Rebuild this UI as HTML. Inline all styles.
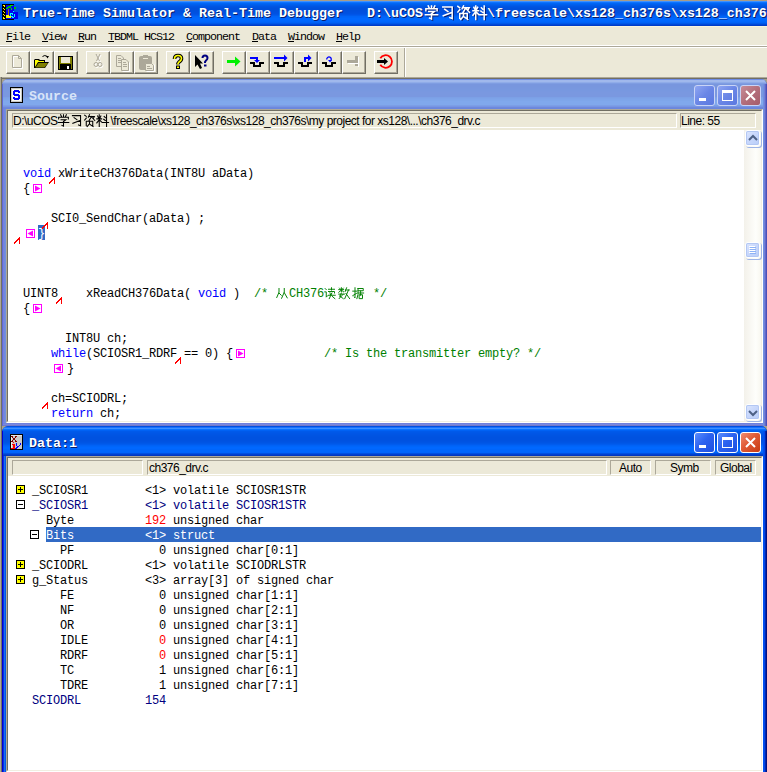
<!DOCTYPE html><html><head><meta charset="utf-8"><style>
*{margin:0;padding:0;box-sizing:border-box}
html,body{width:767px;height:772px;overflow:hidden;background:#ECE9D8;font-family:"Liberation Sans",sans-serif}
.a{position:absolute}
#title{left:0;top:0;width:767px;height:26px;background:linear-gradient(#A89C88 0px,#A89C88 1px,#3D90FF 1px,#3D90FF 2px,#0C72FF 2px,#0C72FF 3px,#0066F5 3px,#0066F5 4px,#0060EE 4px,#0060EE 5px,#005AE8 5px,#005AE8 6px,#0055E2 6px,#0055E2 7px,#0052DE 7px,#0052DE 8px,#0050DC 8px,#0050DC 9px,#0050DC 9px,#0050DC 10px,#0050DC 10px,#0050DC 11px,#0050DE 11px,#0050DE 12px,#0051E0 12px,#0051E0 13px,#0052E2 13px,#0052E2 14px,#0055E8 14px,#0055E8 15px,#005CEE 15px,#005CEE 16px,#0064F8 16px,#0064F8 17px,#0066FA 17px,#0066FA 18px,#0068FF 18px,#0068FF 19px,#0068FF 19px,#0068FF 20px,#0068FF 20px,#0068FF 21px,#0066FC 21px,#0066FC 22px,#0062F6 22px,#0062F6 23px,#0058E8 23px,#0058E8 24px,#0048D8 24px,#0048D8 25px,#003CC8 25px,#003CC8 26px)}
#ttext{left:23px;top:5px;font:bold 13.33px/18px "Liberation Mono",monospace;color:#fff;white-space:pre;text-shadow:1px 1px 0 #0A1C6A}
#menu{left:0;top:26px;width:767px;height:19px;background:linear-gradient(#F8F4DE 0,#F8F4DE 1px,#ECE9D8 1px)}
.mi{top:30px;font:11.67px/14px "Liberation Mono",monospace;letter-spacing:-1px;color:#000;white-space:pre}
.mi u{text-decoration:none}
#sep1{left:0;top:46px;width:767px;height:1px;background:#ACA899}
#sep2{left:0;top:45px;width:767px;height:1px;background:#FFFFFF}#sep3{left:0;top:47px;width:767px;height:1px;background:#FFFFFF}
.btn{top:51px;width:24px;height:23px;border-top:1px solid #fff;border-left:1px solid #fff;border-right:1px solid #716F64;border-bottom:1px solid #716F64;box-shadow:inset -1px -1px 0 #ACA899;background:#ECE9D8}
.btn svg{position:absolute;left:-1px;top:-1px}
#tbend{left:404px;top:48px;width:2px;height:29px;border-left:1px solid #ACA899;border-right:1px solid #fff}
#mdiT{left:0;top:77px;width:767px;height:2px;background:linear-gradient(#ACA899 0,#ACA899 1px,#716F64 1px)}
#mdiL{left:0;top:77px;width:2px;height:695px;background:linear-gradient(90deg,#ACA899 0,#ACA899 1px,#716F64 1px)}
.win{left:2px;width:765px;border-radius:6px 6px 0 0;overflow:hidden}
.code{font:12px/15px "Liberation Mono",monospace;letter-spacing:-0.2px;white-space:pre;color:#000}
.kw{color:#0000FF}.cm{color:#008000}
.fld{border-top:1px solid #ACA899;border-left:1px solid #ACA899;border-bottom:1px solid #fff;border-right:1px solid #fff;background:#ECE9D8;font:12px/13px "Liberation Sans",sans-serif;letter-spacing:-0.5px;color:#000;white-space:pre}
.tb{width:21px;height:21px;border-radius:3px}
.row{font:12px/15px "Liberation Mono",monospace;letter-spacing:-0.2px;white-space:pre;color:#000}
</style></head><body><div id="title" class="a"></div>
<svg class="a" style="left:2px;top:4px" width="16" height="16" viewBox="0 0 16 16" shape-rendering="crispEdges"><rect x="11" y="8" width="5" height="7" fill="#0000F0"/><rect x="10" y="10" width="5" height="5" fill="#0000F0"/><rect x="0" y="0" width="12" height="16" fill="#000"/><rect x="4" y="1" width="8" height="14" fill="#0000F0"/><rect x="1" y="1" width="2" height="1" fill="#FFFF00"/><rect x="2" y="2" width="1" height="1" fill="#FFFF00"/><rect x="1" y="4" width="1" height="1" fill="#FFFF00"/><rect x="2" y="5" width="1" height="1" fill="#FFFF00"/><rect x="1" y="7" width="1" height="1" fill="#FFFF00"/><rect x="2" y="8" width="1" height="1" fill="#FFFF00"/><rect x="1" y="10" width="1" height="1" fill="#FFFF00"/><rect x="2" y="11" width="1" height="1" fill="#FFFF00"/><rect x="1" y="13" width="1" height="1" fill="#FFFF00"/><rect x="1" y="14" width="2" height="1" fill="#FFFF00"/><rect x="6" y="5" width="1" height="4" fill="#A08020"/><rect x="6" y="8" width="1" height="4" fill="#A08020"/><rect x="6" y="2" width="3" height="2" fill="#00C000"/><rect x="5" y="3" width="1" height="1" fill="#00E000"/><rect x="9" y="1" width="2" height="1" fill="#00E000"/><rect x="4" y="4" width="2" height="1" fill="#00E000"/><rect x="9" y="4" width="1" height="2" fill="#00E000"/><rect x="8" y="1" width="1" height="1" fill="#00E000"/><rect x="12" y="3" width="2" height="2" fill="#00C000"/><rect x="8" y="9" width="3" height="1" fill="#00FFFF"/><rect x="8" y="10" width="1" height="2" fill="#00FFFF"/><rect x="10" y="10" width="1" height="1" fill="#00FFFF"/><rect x="9" y="12" width="2" height="1" fill="#00FFFF"/><rect x="11" y="7" width="1" height="1" fill="#00FFFF"/><rect x="12" y="10" width="1" height="3" fill="#00FFFF"/><rect x="10" y="13" width="2" height="1" fill="#00FFFF"/><rect x="4" y="11" width="3" height="3" fill="#FFFF00"/><rect x="7" y="12" width="2" height="2" fill="#FFFF00"/></svg>
<svg class="a" style="left:424px;top:5px;overflow:visible" width="15" height="15" viewBox="0 0 16 16"><path d="M4.5 1 L5.5 3 M8 1 V3 M11.5 1 L10.5 3 M2 6 V4 H14 V6 M5 7 H11 L8 9.5 M8 9 V15 L6 14 M1.5 10.5 H14.5" transform="translate(1,1)" stroke="#0A1C6A" stroke-width="1.6" fill="none"/><path d="M4.5 1 L5.5 3 M8 1 V3 M11.5 1 L10.5 3 M2 6 V4 H14 V6 M5 7 H11 L8 9.5 M8 9 V15 L6 14 M1.5 10.5 H14.5" stroke="#fff" stroke-width="1.6" fill="none" stroke-linecap="square"/></svg><svg class="a" style="left:440px;top:5px;overflow:visible" width="15" height="15" viewBox="0 0 16 16"><path d="M3 2 H13 V14.5 L10.5 13.5 M5 4.5 L8.5 7 M3.5 11.5 L12.5 8" transform="translate(1,1)" stroke="#0A1C6A" stroke-width="1.6" fill="none"/><path d="M3 2 H13 V14.5 L10.5 13.5 M5 4.5 L8.5 7 M3.5 11.5 L12.5 8" stroke="#fff" stroke-width="1.6" fill="none" stroke-linecap="square"/></svg><svg class="a" style="left:456px;top:5px;overflow:visible" width="15" height="15" viewBox="0 0 16 16"><path d="M2 1.5 L4 3 M2 7.5 L4 5 M8 1 L6.5 4 M7 3 H14 L13 5 M10.5 3 L7.5 8 M11 4 L14.5 8 M4 9 V14 M4 9 H12 V14 M8 10 V12 L5 15.5 M9 13 L12.5 15.5" transform="translate(1,1)" stroke="#0A1C6A" stroke-width="1.6" fill="none"/><path d="M2 1.5 L4 3 M2 7.5 L4 5 M8 1 L6.5 4 M7 3 H14 L13 5 M10.5 3 L7.5 8 M11 4 L14.5 8 M4 9 V14 M4 9 H12 V14 M8 10 V12 L5 15.5 M9 13 L12.5 15.5" stroke="#fff" stroke-width="1.6" fill="none" stroke-linecap="square"/></svg><svg class="a" style="left:472px;top:5px;overflow:visible" width="15" height="15" viewBox="0 0 16 16"><path d="M1 6 H7 M4 1 V15.5 M2 2.5 L3 4.5 M6 2.5 L5 4.5 M4 7 L1 11 M4 7 L7 10 M10 3 L11.5 4.5 M9.5 6.5 L11.5 8 M8 10.5 H15.5 M13 1 V15.5" transform="translate(1,1)" stroke="#0A1C6A" stroke-width="1.6" fill="none"/><path d="M1 6 H7 M4 1 V15.5 M2 2.5 L3 4.5 M6 2.5 L5 4.5 M4 7 L1 11 M4 7 L7 10 M10 3 L11.5 4.5 M9.5 6.5 L11.5 8 M8 10.5 H15.5 M13 1 V15.5" stroke="#fff" stroke-width="1.6" fill="none" stroke-linecap="square"/></svg>
<div id="ttext" class="a">True-Time Simulator &amp; Real-Time Debugger   D:\uCOS<span style="display:inline-block;width:64px"></span>\freescale\xs128_ch376s\xs128_ch376s\</div>
<div id="menu" class="a"></div>
<div class="a mi" style="left:6px">File</div><div class="a" style="left:6px;top:41px;width:6px;height:1px;background:#000"></div>
<div class="a mi" style="left:42px">View</div><div class="a" style="left:42px;top:41px;width:6px;height:1px;background:#000"></div>
<div class="a mi" style="left:78px">Run</div><div class="a" style="left:78px;top:41px;width:6px;height:1px;background:#000"></div>
<div class="a mi" style="left:108px">TBDML HCS12</div><div class="a" style="left:108px;top:41px;width:6px;height:1px;background:#000"></div>
<div class="a mi" style="left:186px">Component</div><div class="a" style="left:186px;top:41px;width:6px;height:1px;background:#000"></div>
<div class="a mi" style="left:252px">Data</div><div class="a" style="left:252px;top:41px;width:6px;height:1px;background:#000"></div>
<div class="a mi" style="left:288px">Window</div><div class="a" style="left:288px;top:41px;width:6px;height:1px;background:#000"></div>
<div class="a mi" style="left:336px">Help</div><div class="a" style="left:336px;top:41px;width:6px;height:1px;background:#000"></div>
<div id="sep1" class="a"></div><div id="sep2" class="a"></div><div id="sep3" class="a"></div>
<div class="a btn" style="left:6px"><svg width="24" height="23" viewBox="0 0 24 23"><path d="M7.5 5.5 H13.5 L16.5 8.5 V17.5 H7.5 Z" fill="none" stroke="#fff"/><path d="M6.5 4.5 H12.5 L15.5 7.5 V16.5 H6.5 Z M12.5 4.5 V7.5 H15.5" fill="none" stroke="#ACA899"/></svg></div>
<div class="a btn" style="left:30px"><svg width="24" height="23" viewBox="0 0 24 23"><path d="M4 9 V17 H15 L19 11 H15 V9 H10 L9 8 H5 Z" fill="#000"/><path d="M5 9 H8 L9 10 H14 V11 H8 L5 16 Z" fill="#FFFF00"/><path d="M8.5 12 H18 L14.5 16.5 H5.5 Z" fill="#808000"/><path d="M12.5 5.5 Q14.5 3.5 17.5 5.5" stroke="#000" fill="none"/><path d="M16 5 H19 L17.5 7.5 Z" fill="#000"/></svg></div>
<div class="a btn" style="left:54px"><svg width="24" height="23" viewBox="0 0 24 23"><rect x="4" y="5" width="15" height="14" fill="#000"/><rect x="5" y="6" width="13" height="7" fill="#808000"/><rect x="7" y="6" width="9" height="6" fill="#ECE9D8"/><rect x="7" y="14" width="9" height="5" fill="#000"/><rect x="13" y="15" width="2" height="3" fill="#fff"/><rect x="5" y="13" width="1" height="5" fill="#808000"/><rect x="17" y="13" width="1" height="5" fill="#808000"/></svg></div>
<div class="a btn" style="left:86px"><svg width="24" height="23" viewBox="0 0 24 23"><path d="M11 4 L14.5 11 M15 4 L11.5 11" stroke="#fff" fill="none"/><circle cx="11" cy="14.5" r="2" stroke="#fff" fill="none"/><circle cx="15" cy="14.5" r="2" stroke="#fff" fill="none"/><path d="M10 3 L13.5 10 M14 3 L10.5 10" stroke="#ACA899" fill="none"/><circle cx="10" cy="13.5" r="2" stroke="#ACA899" fill="none"/><circle cx="14" cy="13.5" r="2" stroke="#ACA899" fill="none"/></svg></div>
<div class="a btn" style="left:110px"><svg width="24" height="23" viewBox="0 0 24 23"><path d="M6.5 4.5 H11 L13.5 7 V15.5 H6.5 Z" fill="#ECE9D8" stroke="#ACA899"/><path d="M8 7.5 H11 M8 9.5 H12 M8 11.5 H12" stroke="#ACA899"/><path d="M11.5 8.5 H16 L18.5 11 V19.5 H11.5 Z" fill="#ECE9D8" stroke="#ACA899"/><path d="M13 11.5 H16 M13 13.5 H17 M13 15.5 H17" stroke="#ACA899"/><path d="M12.5 20.5 H19.5 V11.5" stroke="#fff" fill="none"/></svg></div>
<div class="a btn" style="left:134px"><svg width="24" height="23" viewBox="0 0 24 23"><rect x="5" y="5" width="13" height="14" rx="2" fill="#ACA899"/><rect x="9" y="4" width="5" height="2" fill="#ACA899"/><rect x="9" y="7" width="5" height="1" fill="#ECE9D8"/><path d="M11.5 12.5 H17.5 L19.5 14.5 V19.5 H11.5 Z" fill="#ECE9D8" stroke="#ACA899"/><path d="M13 15.5 H16 M13 17.5 H18" stroke="#ACA899"/><path d="M12.5 20.5 H20.5 V13.5" stroke="#fff" fill="none"/></svg></div>
<div class="a btn" style="left:166px"><svg width="24" height="23" viewBox="0 0 24 23"><path d="M8.5 8 Q8.5 4.5 12 4.5 Q15.5 4.5 15.5 7.5 Q15.5 9.5 13 11 L12 12.5 V13.5" stroke="#000" stroke-width="3.6" fill="none"/><path d="M8.5 8 Q8.5 4.5 12 4.5 Q15.5 4.5 15.5 7.5 Q15.5 9.5 13 11 L12 12.5 V13.5" stroke="#FFFF00" stroke-width="1.6" fill="none"/><rect x="10" y="14.5" width="4" height="3.5" fill="#000"/><rect x="11" y="15.5" width="2" height="1.5" fill="#FFFF00"/></svg></div>
<div class="a btn" style="left:190px"><svg width="24" height="23" viewBox="0 0 24 23"><path d="M5 4 V16 L7.5 13.5 L10 18 L12 17 L10 12.5 L13 12.5 Z" fill="#000"/><path d="M12.5 7 Q12.5 4.5 15 4.5 Q17.5 4.5 17.5 7 Q17.5 8.5 16 9.5 L15 11 V12" stroke="#000080" stroke-width="2" fill="none"/><rect x="14" y="13.5" width="2.5" height="2" fill="#000080"/></svg></div>
<div class="a btn" style="left:222px"><svg width="24" height="23" viewBox="0 0 24 23"><rect x="5" y="9" width="9" height="3" fill="#00F000"/><path d="M13 5.5 L18.5 10.5 L13 15.5 Z" fill="#00F000"/></svg></div>
<div class="a btn" style="left:246px"><svg width="24" height="23" viewBox="0 0 24 23"><rect x="4" y="6" width="7" height="2" fill="#0000FF"/><rect x="10" y="6" width="2" height="4" fill="#0000FF"/><path d="M8 9 H14 L11 12 Z" fill="#0000FF"/><path d="M4 11 H9 V14 H13 V11 H18 V13 H15 V16 H7 V13 H4 Z" fill="#000"/></svg></div>
<div class="a btn" style="left:270px"><svg width="24" height="23" viewBox="0 0 24 23"><rect x="4" y="6" width="11" height="2" fill="#0000FF"/><path d="M14 3.5 L17.5 7 L14 10.5 Z" fill="#0000FF"/><path d="M4 11 H9 V14 H13 V11 H18 V13 H15 V16 H7 V13 H4 Z" fill="#000"/></svg></div>
<div class="a btn" style="left:294px"><svg width="24" height="23" viewBox="0 0 24 23"><rect x="10" y="6" width="2" height="5" fill="#0000FF"/><rect x="10" y="6" width="5" height="2" fill="#0000FF"/><path d="M14 3.5 L17.5 7 L14 10.5 Z" fill="#0000FF"/><path d="M4 11 H9 V14 H13 V11 H18 V13 H15 V16 H7 V13 H4 Z" fill="#000"/></svg></div>
<div class="a btn" style="left:318px"><svg width="24" height="23" viewBox="0 0 24 23"><path d="M8.7 8.5 A2.3 2.3 0 1 1 12.5 10" stroke="#0000FF" stroke-width="1.3" fill="none"/><path d="M10 9 H14 L12 11.5 Z" fill="#0000FF"/><path d="M4 11 H9 V14 H13 V11 H18 V13 H15 V16 H7 V13 H4 Z" fill="#000"/></svg></div>
<div class="a btn" style="left:342px"><svg width="24" height="23" viewBox="0 0 24 23"><rect x="5" y="9" width="10" height="3" fill="#ACA899"/><rect x="13" y="5" width="3" height="10" fill="#ACA899"/><rect x="6" y="12" width="10" height="1" fill="#fff"/><rect x="16" y="6" width="1" height="10" fill="#fff"/></svg></div>
<div class="a btn" style="left:374px"><svg width="24" height="23" viewBox="0 0 24 23"><path d="M6.3 7.2 A6.3 6.3 0 1 1 6.3 13.8" stroke="#FF0000" stroke-width="1.8" fill="none"/><rect x="3" y="9" width="8" height="3" fill="#000"/><path d="M10 7 L14 10.5 L10 14 Z" fill="#000"/></svg></div>
<div id="tbend" class="a"></div>
<div id="mdiT" class="a"></div><div id="mdiL" class="a"></div><div class="a" style="left:2px;top:79px;width:765px;height:693px;background:#A8A28C"></div>
<div class="a win" style="top:79px;height:347px;background:linear-gradient(90deg,#5E6AD8 0,#5E6AD8 1px,#7880DC 1px,#7880DC 2px,#7088E0 2px,#7088E0 3px,#7090E0 3px,#7090E0 761px,#7090E0 761px,#7090E0 762px,#7080D8 762px,#7080D8 763px,#4A50B8 763px)">
<div class="a" style="left:0;top:344px;width:765px;height:3px;background:linear-gradient(#7080DC 0,#7080DC 1px,#7888E0 1px,#7888E0 2px,#7478C8 2px)"></div>
<div class="a" style="left:0;top:0;width:765px;height:30px;border-radius:6px 6px 0 0;background:linear-gradient(#6E8CE6 0px,#6E8CE6 1px,#A0B8EC 1px,#A0B8EC 2px,#A0B8EC 2px,#A0B8EC 3px,#90ACE8 3px,#90ACE8 4px,#7F9DE2 4px,#7F9DE2 5px,#7896DE 5px,#7896DE 6px,#7896DE 6px,#7896DE 7px,#7896DE 7px,#7896DE 8px,#7897DE 8px,#7897DE 9px,#7897DF 9px,#7897DF 10px,#7898DF 10px,#7898DF 11px,#7898E0 11px,#7898E0 12px,#7998E0 12px,#7998E0 13px,#7A98E0 13px,#7A98E0 14px,#7A98E0 14px,#7A98E0 15px,#7A98E0 15px,#7A98E0 16px,#7A98E0 16px,#7A98E0 17px,#7A98E0 17px,#7A98E0 18px,#7CA0E6 18px,#7CA0E6 19px,#7DA3E8 19px,#7DA3E8 20px,#7EA5EA 20px,#7EA5EA 21px,#7EA6EA 21px,#7EA6EA 22px,#80A8EC 22px,#80A8EC 23px,#80A8EC 23px,#80A8EC 24px,#80A8EC 24px,#80A8EC 25px,#80A8EC 25px,#80A8EC 26px,#7C9EE6 26px,#7C9EE6 27px,#7796E2 27px,#7796E2 28px,#6E88DE 28px,#6E88DE 29px,#6A86DC 29px,#6A86DC 30px)"></div>
<svg class="a" style="left:8px;top:8px" width="13" height="16" shape-rendering="crispEdges"><rect x="0" y="0" width="13" height="16" fill="#000"/><rect x="1" y="1" width="11" height="14" fill="#C8C8C8"/><rect x="2" y="2" width="9" height="12" fill="#FAFAF2"/><rect x="4" y="3" width="5" height="2" fill="#0000FF"/><rect x="8" y="4" width="2" height="2" fill="#0000FF"/><rect x="3" y="4" width="2" height="4" fill="#0000FF"/><rect x="4" y="7" width="5" height="2" fill="#0000FF"/><rect x="8" y="8" width="2" height="4" fill="#0000FF"/><rect x="3" y="10" width="2" height="2" fill="#0000FF"/><rect x="4" y="11" width="5" height="2" fill="#0000FF"/></svg>
<div class="a" style="left:27px;top:9px;font:bold 13.33px/18px 'Liberation Mono',monospace;color:#D8E4F8;white-space:pre">Source</div>
<div class="a" style="left:0;top:5px;width:1px;height:342px;background:#5E6AD8"></div><div class="a" style="left:761px;top:5px;width:4px;height:342px;background:linear-gradient(90deg,#7090E0 0,#7090E0 1px,#7080D8 1px,#7080D8 2px,#6068C8 2px,#6068C8 3px,#4A50B8 3px)"></div>
<div class="a tb" style="left:692px;top:6px;background:linear-gradient(135deg,#8FA6F2 0%,#6A86E6 50%,#5B78E0 100%);border:1px solid #C9D4F6"><div class="a" style="left:4px;top:12px;width:7px;height:3px;background:#fff"></div></div><div class="a tb" style="left:715px;top:6px;background:linear-gradient(135deg,#8FA6F2 0%,#6A86E6 50%,#5B78E0 100%);border:1px solid #C9D4F6"><div class="a" style="left:4px;top:4px;width:11px;height:11px;border:1px solid #fff;border-top-width:3px"></div></div><div class="a tb" style="left:738px;top:6px;background:linear-gradient(135deg,#C78C98 0%,#B36E7B 50%,#A65C6A 100%);border:1px solid #C9D4F6"><svg class="a" style="left:4px;top:4px" width="11" height="11"><path d="M1 1L10 10M10 1L1 10" stroke="#fff" stroke-width="2"/></svg></div>
<div class="a" style="left:4px;top:30px;width:757px;height:314px;border-top:1px solid #ACA899;border-left:1px solid #ACA899;border-bottom:1px solid #fff;border-right:1px solid #fff;background:#ECE9D8"><div class="a" style="left:0;top:0;right:0;bottom:0;border-top:1px solid #716F64;border-left:1px solid #716F64;border-bottom:1px solid #F1EFE2;border-right:1px solid #F1EFE2"></div></div>
</div>
<div class="a win" style="top:426px;height:346px;background:linear-gradient(90deg,#0000D8 0,#0000D8 1px,#0A30E0 1px,#0A30E0 2px,#1870F0 2px,#1870F0 3px,#0058E8 3px,#0058E8 761px,#0050F0 761px,#0048E8 762px,#0028B0 763px,#001080 764px)">
<div class="a" style="left:0;top:0;width:765px;height:30px;border-radius:6px 6px 0 0;background:linear-gradient(#0050E0 0px,#0050E0 1px,#1870FF 1px,#1870FF 2px,#3C90FF 2px,#3C90FF 3px,#0A70FF 3px,#0A70FF 4px,#0062F4 4px,#0062F4 5px,#005AEA 5px,#005AEA 6px,#0058E8 6px,#0058E8 7px,#0056E6 7px,#0056E6 8px,#0055E4 8px,#0055E4 9px,#0054E2 9px,#0054E2 10px,#0053E1 10px,#0053E1 11px,#0052E0 11px,#0052E0 12px,#0052E0 12px,#0052E0 13px,#0052E0 13px,#0052E0 14px,#0052E0 14px,#0052E0 15px,#0053E2 15px,#0053E2 16px,#0055E4 16px,#0055E4 17px,#0058E8 17px,#0058E8 18px,#005CEE 18px,#005CEE 19px,#0062F6 19px,#0062F6 20px,#0066FA 20px,#0066FA 21px,#0068FF 21px,#0068FF 22px,#0068FF 22px,#0068FF 23px,#0066FC 23px,#0066FC 24px,#0066FC 24px,#0066FC 25px,#0066FC 25px,#0066FC 26px,#0064FA 26px,#0064FA 27px,#0050E0 27px,#0050E0 28px,#0040D0 28px,#0040D0 29px,#0038C0 29px,#0038C0 30px)"></div>
<svg class="a" style="left:8px;top:8px" width="13" height="16" shape-rendering="crispEdges"><rect x="0" y="0" width="13" height="16" fill="#000"/><rect x="1" y="1" width="11" height="14" fill="#C8C8C8"/><rect x="1" y="1" width="1" height="14" fill="#F0F0F0"/><rect x="1" y="1" width="11" height="1" fill="#E8E8E8"/><rect x="1" y="2" width="1" height="1" fill="#800000"/><rect x="2" y="2" width="1" height="1" fill="#800000"/><rect x="5" y="2" width="1" height="1" fill="#800000"/><rect x="6" y="2" width="1" height="1" fill="#800000"/><rect x="2" y="3" width="1" height="1" fill="#800000"/><rect x="5" y="3" width="1" height="1" fill="#800000"/><rect x="3" y="4" width="1" height="1" fill="#800000"/><rect x="4" y="4" width="1" height="1" fill="#800000"/><rect x="3" y="5" width="1" height="1" fill="#800000"/><rect x="4" y="5" width="1" height="1" fill="#800000"/><rect x="2" y="6" width="1" height="1" fill="#800000"/><rect x="5" y="6" width="1" height="1" fill="#800000"/><rect x="1" y="7" width="1" height="1" fill="#800000"/><rect x="2" y="7" width="1" height="1" fill="#800000"/><rect x="5" y="7" width="1" height="1" fill="#800000"/><rect x="6" y="7" width="1" height="1" fill="#800000"/><rect x="3" y="8" width="1" height="1" fill="#FF0000"/><rect x="2" y="10" width="3" height="1" fill="#FF0000"/><rect x="3" y="11" width="2" height="3" fill="#FF0000"/><rect x="1" y="14" width="6" height="1" fill="#FF0000"/><rect x="6" y="9" width="1" height="3" fill="#0000FF"/><rect x="10" y="9" width="1" height="2" fill="#0000FF"/><rect x="9" y="11" width="1" height="1" fill="#0000FF"/><rect x="7" y="12" width="2" height="1" fill="#0000FF"/><rect x="8" y="12" width="1" height="1" fill="#0000FF"/><rect x="6" y="13" width="2" height="1" fill="#0000FF"/><rect x="5" y="14" width="2" height="1" fill="#0000FF"/></svg>
<div class="a" style="left:27px;top:9px;font:bold 13.33px/18px 'Liberation Mono',monospace;color:#fff;white-space:pre;text-shadow:1px 1px 0 #0A1C6A">Data:1</div>
<div class="a" style="left:0;top:5px;width:1px;height:342px;background:#0000D8"></div><div class="a" style="left:761px;top:5px;width:4px;height:342px;background:linear-gradient(90deg,#0050F0 0,#0050F0 1px,#0048E8 1px,#0048E8 2px,#0028B0 2px,#0028B0 3px,#001080 3px)"></div>
<div class="a tb" style="left:692px;top:6px;background:linear-gradient(135deg,#5A8DFF 0%,#2D63F0 45%,#1E4FE0 100%);border:1px solid #fff"><div class="a" style="left:4px;top:12px;width:7px;height:3px;background:#fff"></div></div><div class="a tb" style="left:715px;top:6px;background:linear-gradient(135deg,#5A8DFF 0%,#2D63F0 45%,#1E4FE0 100%);border:1px solid #fff"><div class="a" style="left:4px;top:4px;width:11px;height:11px;border:1px solid #fff;border-top-width:3px"></div></div><div class="a tb" style="left:738px;top:6px;background:linear-gradient(135deg,#F08C70 0%,#E05A35 45%,#C83A12 100%);border:1px solid #fff"><svg class="a" style="left:4px;top:4px" width="11" height="11"><path d="M1 1L10 10M10 1L1 10" stroke="#fff" stroke-width="2"/></svg></div>
<div class="a" style="left:4px;top:30px;width:757px;height:316px;border-top:1px solid #ACA899;border-left:1px solid #ACA899;border-bottom:1px solid #fff;border-right:1px solid #fff;background:#ECE9D8"><div class="a" style="left:0;top:0;right:0;bottom:0;border-top:1px solid #716F64;border-left:1px solid #716F64;border-bottom:1px solid #F1EFE2;border-right:1px solid #F1EFE2"></div></div>
</div>
<div class="a fld" style="left:12px;top:113px;width:665px;height:15px;padding-left:0px;padding-top:1px;">D:\uCOS<span style="display:inline-block;width:53px"></span>\freescale\xs128_ch376s\xs128_ch376s\my project for xs128\...\ch376_drv.c</div>
<div class="a fld" style="left:680px;top:113px;width:76px;height:15px;padding-left:0px;padding-top:1px;">Line: 55</div>
<svg class="a" style="left:57px;top:114px;overflow:visible" width="13" height="13" viewBox="0 0 16 16"><path d="M4.5 1 L5.5 3 M8 1 V3 M11.5 1 L10.5 3 M2 6 V4 H14 V6 M5 7 H11 L8 9.5 M8 9 V15 L6 14 M1.5 10.5 H14.5" stroke="#000" stroke-width="1.3" fill="none" stroke-linecap="square"/></svg><svg class="a" style="left:70px;top:114px;overflow:visible" width="13" height="13" viewBox="0 0 16 16"><path d="M3 2 H13 V14.5 L10.5 13.5 M5 4.5 L8.5 7 M3.5 11.5 L12.5 8" stroke="#000" stroke-width="1.3" fill="none" stroke-linecap="square"/></svg><svg class="a" style="left:83px;top:114px;overflow:visible" width="13" height="13" viewBox="0 0 16 16"><path d="M2 1.5 L4 3 M2 7.5 L4 5 M8 1 L6.5 4 M7 3 H14 L13 5 M10.5 3 L7.5 8 M11 4 L14.5 8 M4 9 V14 M4 9 H12 V14 M8 10 V12 L5 15.5 M9 13 L12.5 15.5" stroke="#000" stroke-width="1.3" fill="none" stroke-linecap="square"/></svg><svg class="a" style="left:96px;top:114px;overflow:visible" width="13" height="13" viewBox="0 0 16 16"><path d="M1 6 H7 M4 1 V15.5 M2 2.5 L3 4.5 M6 2.5 L5 4.5 M4 7 L1 11 M4 7 L7 10 M10 3 L11.5 4.5 M9.5 6.5 L11.5 8 M8 10.5 H15.5 M13 1 V15.5" stroke="#000" stroke-width="1.3" fill="none" stroke-linecap="square"/></svg>
<div class="a" style="left:8px;top:130px;width:736px;height:291px;background:#fff"></div>
<div class="a" style="left:744px;top:130px;width:17px;height:291px;background:linear-gradient(90deg,#F3F1EA,#FEFEFB 70%,#F8F7F0)"></div>
<div class="a" style="left:745px;top:130px;width:16px;height:17px;border-radius:3px;box-shadow:1px 1px 0 #9DB4E6"></div><div class="a" style="left:745px;top:130px;width:15px;height:16px;border:1px solid #fff;border-radius:3px;background:#fff"><div class="a" style="left:0;top:0;width:13px;height:14px;border-radius:2px;background:linear-gradient(135deg,#DDE7FE 0%,#C9D8FC 45%,#B9CEF8 100%);box-shadow:inset 0 0 0 1px #B3C7F3"></div><svg class="a" style="left:2px;top:3px" width="10" height="7"><path d="M1 6 L5 2 L9 6" stroke="#4D6185" stroke-width="2" fill="none"/></svg></div>
<div class="a" style="left:745px;top:404px;width:16px;height:17px;border-radius:3px;box-shadow:1px 1px 0 #9DB4E6"></div><div class="a" style="left:745px;top:404px;width:15px;height:16px;border:1px solid #fff;border-radius:3px;background:#fff"><div class="a" style="left:0;top:0;width:13px;height:14px;border-radius:2px;background:linear-gradient(135deg,#DDE7FE 0%,#C9D8FC 45%,#B9CEF8 100%);box-shadow:inset 0 0 0 1px #B3C7F3"></div><svg class="a" style="left:2px;top:5px" width="10" height="7"><path d="M1 1 L5 5 L9 1" stroke="#4D6185" stroke-width="2" fill="none"/></svg></div>
<div class="a" style="left:745px;top:242px;width:16px;height:17px;border-radius:3px;box-shadow:1px 1px 0 #9DB4E6"></div><div class="a" style="left:745px;top:242px;width:15px;height:16px;border:1px solid #fff;border-radius:3px;background:#fff"><div class="a" style="left:0;top:0;width:13px;height:14px;border-radius:2px;background:linear-gradient(135deg,#DDE7FE 0%,#C9D8FC 45%,#B9CEF8 100%);box-shadow:inset 0 0 0 1px #B3C7F3"></div><svg class="a" style="left:3px;top:3px" width="8" height="9"><path d="M1 1.5H7M1 3.5H7M1 5.5H7M1 7.5H7" stroke="#8EB2F6" stroke-width="1"/><path d="M0 0.5H6M0 2.5H6M0 4.5H6M0 6.5H6" stroke="#FFFFFF" stroke-width="1"/></svg></div>
<div class="a code kw" style="left:23px;top:167px">void</div>
<div class="a code" style="left:58px;top:167px">xWriteCH376Data(INT8U aData)</div>
<svg class="a" style="left:49px;top:177px" width="7" height="7" shape-rendering="crispEdges" fill="#FF0000"><rect x="5" y="0" width="1" height="7"/><rect x="0" y="5" width="1" height="2"/><rect x="1" y="4" width="1" height="2"/><rect x="2" y="3" width="1" height="2"/><rect x="3" y="2" width="1" height="2"/><rect x="4" y="1" width="1" height="2"/></svg>
<div class="a code" style="left:23px;top:182px">{</div>
<svg class="a" style="left:33px;top:184px" width="9" height="9"><rect x="0.5" y="0.5" width="8" height="8" fill="#fff" stroke="#FF00FF"/><path d="M2 1.5 L2 7.5 L7.5 4.5 Z" fill="#FF00FF"/></svg>
<div class="a code" style="left:51px;top:212px">SCI0_SendChar(aData) ;</div>
<svg class="a" style="left:42px;top:222px" width="7" height="7" shape-rendering="crispEdges" fill="#FF0000"><rect x="5" y="0" width="1" height="7"/><rect x="0" y="5" width="1" height="2"/><rect x="1" y="4" width="1" height="2"/><rect x="2" y="3" width="1" height="2"/><rect x="3" y="2" width="1" height="2"/><rect x="4" y="1" width="1" height="2"/></svg>
<svg class="a" style="left:26px;top:229px" width="9" height="9"><rect x="0.5" y="0.5" width="8" height="8" fill="#fff" stroke="#FF00FF"/><path d="M7 1.5 L7 7.5 L1.5 4.5 Z" fill="#FF00FF"/></svg>
<div class="a" style="left:38px;top:225px;width:7px;height:15px;background:#316AC5"></div>
<div class="a code" style="left:38px;color:#fff;top:227px">}</div>
<svg class="a" style="left:42px;top:222px" width="7" height="7" shape-rendering="crispEdges" fill="#FF0000"><rect x="5" y="0" width="1" height="7"/><rect x="0" y="5" width="1" height="2"/><rect x="1" y="4" width="1" height="2"/><rect x="2" y="3" width="1" height="2"/><rect x="3" y="2" width="1" height="2"/><rect x="4" y="1" width="1" height="2"/></svg>
<svg class="a" style="left:14px;top:237px" width="7" height="7" shape-rendering="crispEdges" fill="#FF0000"><rect x="5" y="0" width="1" height="7"/><rect x="0" y="5" width="1" height="2"/><rect x="1" y="4" width="1" height="2"/><rect x="2" y="3" width="1" height="2"/><rect x="3" y="2" width="1" height="2"/><rect x="4" y="1" width="1" height="2"/></svg>
<div class="a code" style="left:23px;top:287px">UINT8</div>
<svg class="a" style="left:56px;top:297px" width="7" height="7" shape-rendering="crispEdges" fill="#FF0000"><rect x="5" y="0" width="1" height="7"/><rect x="0" y="5" width="1" height="2"/><rect x="1" y="4" width="1" height="2"/><rect x="2" y="3" width="1" height="2"/><rect x="3" y="2" width="1" height="2"/><rect x="4" y="1" width="1" height="2"/></svg>
<div class="a code" style="left:86px;top:287px">xReadCH376Data( <span class="kw">void</span> )  <span class="cm">/* <span style="display:inline-block;width:14px"></span>CH376<span style="display:inline-block;width:42px"></span> */</span></div>
<div class="a code" style="left:23px;top:302px">{</div>
<svg class="a" style="left:33px;top:304px" width="9" height="9"><rect x="0.5" y="0.5" width="8" height="8" fill="#fff" stroke="#FF00FF"/><path d="M2 1.5 L2 7.5 L7.5 4.5 Z" fill="#FF00FF"/></svg>
<svg class="a" style="left:276px;top:287px;overflow:visible" width="12" height="12" viewBox="0 0 16 16"><path d="M4 2 V7 L1 14 M4 8 L7 11 M11 2 V7 L7.5 15 M11 7.5 L15 14.5" stroke="#008000" stroke-width="1.3" fill="none" stroke-linecap="square"/></svg>
<svg class="a" style="left:324px;top:287px;overflow:visible" width="12" height="12" viewBox="0 0 16 16"><path d="M1.5 2 L3 3.5 M1 6.5 H3 V13.5 L5 11.5 M10 1 V4 M6 3 H14 M6 6 H14 V8 M8 7.5 L9.5 9 M8 9.5 L9.5 10.5 M6 11 H15 M10.5 8 L7 15.5 M11 12.5 L14.5 15.5" stroke="#008000" stroke-width="1.3" fill="none" stroke-linecap="square"/></svg><svg class="a" style="left:338px;top:287px;overflow:visible" width="12" height="12" viewBox="0 0 16 16"><path d="M4.5 1 V6 M1 3.5 H7.5 M2 1.5 L3 2.5 M7 1.5 L6 2.5 M4.5 4 L1 7 M4.5 4 L7.5 6.5 M1 9.5 H8.5 M4.5 8 L2.5 13 M2.5 12 L7 15.5 M7 9.5 L1.5 15.5 M11.5 1 L9.5 6 M10 4 H15 M14 4 L9 15.5 M10.5 8.5 L15.5 15.5" stroke="#008000" stroke-width="1.3" fill="none" stroke-linecap="square"/></svg><svg class="a" style="left:352px;top:287px;overflow:visible" width="12" height="12" viewBox="0 0 16 16"><path d="M1 5.5 H6 M4 1 V14.5 L3 13.5 M1 11.5 L6 8.5 M8 2 H15 V5 H8 M8 2 V10 L6.5 15.5 M8 8 H15.5 M11.5 5.5 V11 M9.5 11 V15.5 H14 V11 Z" stroke="#008000" stroke-width="1.3" fill="none" stroke-linecap="square"/></svg>
<div class="a code" style="left:65px;top:332px">INT8U ch;</div>
<div class="a code" style="left:51px;top:347px"><span class="kw">while</span>(SCIOSR1_RDRF</div>
<svg class="a" style="left:175px;top:357px" width="7" height="7" shape-rendering="crispEdges" fill="#FF0000"><rect x="5" y="0" width="1" height="7"/><rect x="0" y="5" width="1" height="2"/><rect x="1" y="4" width="1" height="2"/><rect x="2" y="3" width="1" height="2"/><rect x="3" y="2" width="1" height="2"/><rect x="4" y="1" width="1" height="2"/></svg>
<div class="a code" style="left:184px;top:347px">== 0) {</div>
<svg class="a" style="left:236px;top:349px" width="9" height="9"><rect x="0.5" y="0.5" width="8" height="8" fill="#fff" stroke="#FF00FF"/><path d="M2 1.5 L2 7.5 L7.5 4.5 Z" fill="#FF00FF"/></svg>
<div class="a code cm" style="left:324px;top:347px">/* Is the transmitter empty? */</div>
<svg class="a" style="left:54px;top:364px" width="9" height="9"><rect x="0.5" y="0.5" width="8" height="8" fill="#fff" stroke="#FF00FF"/><path d="M7 1.5 L7 7.5 L1.5 4.5 Z" fill="#FF00FF"/></svg>
<div class="a code" style="left:67px;top:362px">}</div>
<div class="a code" style="left:51px;top:392px">ch=SCIODRL;</div>
<svg class="a" style="left:42px;top:402px" width="7" height="7" shape-rendering="crispEdges" fill="#FF0000"><rect x="5" y="0" width="1" height="7"/><rect x="0" y="5" width="1" height="2"/><rect x="1" y="4" width="1" height="2"/><rect x="2" y="3" width="1" height="2"/><rect x="3" y="2" width="1" height="2"/><rect x="4" y="1" width="1" height="2"/></svg>
<div class="a code" style="left:51px;top:407px"><span class="kw">return</span> ch;</div>
<div class="a fld" style="left:12px;top:460px;width:131px;height:15px;padding-left:2px;padding-top:1px;"></div>
<div class="a fld" style="left:147px;top:460px;width:460px;height:15px;padding-left:1px;padding-top:1px;">ch376_drv.c</div>
<div class="a fld" style="left:610px;top:460px;width:41px;height:15px;padding-left:8px;padding-top:1px;">Auto</div>
<div class="a fld" style="left:655px;top:460px;width:56px;height:15px;padding-left:14px;padding-top:1px;">Symb</div>
<div class="a fld" style="left:715px;top:460px;width:41px;height:15px;padding-left:4px;padding-top:1px;">Global</div>
<div class="a" style="left:8px;top:476px;width:753px;height:294px;background:#fff"></div>
<svg class="a" style="left:16px;top:485px" width="9" height="9"><rect x="0.5" y="0.5" width="8" height="8" fill="#FFFF00" stroke="#000"/><path d="M2 4.5 L7 4.5" stroke="#000"/><path d="M4.5 2 L4.5 7" stroke="#000"/></svg>
<div class="a row" style="left:32px;top:484px;color:#000">_SCIOSR1</div>
<div class="a row" style="left:145px;top:484px;color:#000">&lt;1&gt; volatile SCIOSR1STR</div>
<svg class="a" style="left:16px;top:500px" width="9" height="9"><rect x="0.5" y="0.5" width="8" height="8" fill="#fff" stroke="#000"/><path d="M2 4.5 L7 4.5" stroke="#000"/></svg>
<div class="a row" style="left:32px;top:499px;color:#000080">_SCIOSR1</div>
<div class="a row" style="left:145px;top:499px;color:#000080">&lt;1&gt; volatile SCIOSR1STR</div>
<div class="a row" style="left:46px;top:514px;color:#000">Byte</div>
<div class="a row" style="left:145px;top:514px;color:#000"><span style="color:#f00">192</span> unsigned char</div>
<div class="a" style="left:46px;top:527px;width:715px;height:15px;background:#316AC5"></div>
<svg class="a" style="left:30px;top:530px" width="9" height="9"><rect x="0.5" y="0.5" width="8" height="8" fill="#fff" stroke="#000"/><path d="M2 4.5 L7 4.5" stroke="#000"/></svg>
<div class="a row" style="left:46px;top:529px;color:#fff">Bits</div>
<div class="a row" style="left:145px;top:529px;color:#fff">&lt;1&gt; struct</div>
<div class="a row" style="left:60px;top:544px;color:#000">PF</div>
<div class="a row" style="left:145px;top:544px;color:#000">  0 unsigned char[0:1]</div>
<svg class="a" style="left:16px;top:560px" width="9" height="9"><rect x="0.5" y="0.5" width="8" height="8" fill="#FFFF00" stroke="#000"/><path d="M2 4.5 L7 4.5" stroke="#000"/><path d="M4.5 2 L4.5 7" stroke="#000"/></svg>
<div class="a row" style="left:32px;top:559px;color:#000">_SCIODRL</div>
<div class="a row" style="left:145px;top:559px;color:#000">&lt;1&gt; volatile SCIODRLSTR</div>
<svg class="a" style="left:16px;top:575px" width="9" height="9"><rect x="0.5" y="0.5" width="8" height="8" fill="#FFFF00" stroke="#000"/><path d="M2 4.5 L7 4.5" stroke="#000"/><path d="M4.5 2 L4.5 7" stroke="#000"/></svg>
<div class="a row" style="left:32px;top:574px;color:#000">g_Status</div>
<div class="a row" style="left:145px;top:574px;color:#000">&lt;3&gt; array[3] of signed char</div>
<div class="a row" style="left:60px;top:589px;color:#000">FE</div>
<div class="a row" style="left:145px;top:589px;color:#000">  0 unsigned char[1:1]</div>
<div class="a row" style="left:60px;top:604px;color:#000">NF</div>
<div class="a row" style="left:145px;top:604px;color:#000">  0 unsigned char[2:1]</div>
<div class="a row" style="left:60px;top:619px;color:#000">OR</div>
<div class="a row" style="left:145px;top:619px;color:#000">  0 unsigned char[3:1]</div>
<div class="a row" style="left:60px;top:634px;color:#000">IDLE</div>
<div class="a row" style="left:145px;top:634px;color:#000">  <span style="color:#f00">0</span> unsigned char[4:1]</div>
<div class="a row" style="left:60px;top:649px;color:#000">RDRF</div>
<div class="a row" style="left:145px;top:649px;color:#000">  <span style="color:#f00">0</span> unsigned char[5:1]</div>
<div class="a row" style="left:60px;top:664px;color:#000">TC</div>
<div class="a row" style="left:145px;top:664px;color:#000">  1 unsigned char[6:1]</div>
<div class="a row" style="left:60px;top:679px;color:#000">TDRE</div>
<div class="a row" style="left:145px;top:679px;color:#000">  1 unsigned char[7:1]</div>
<div class="a row" style="left:32px;top:694px;color:#000080">SCIODRL</div>
<div class="a row" style="left:145px;top:694px;color:#000080">154</div></body></html>
